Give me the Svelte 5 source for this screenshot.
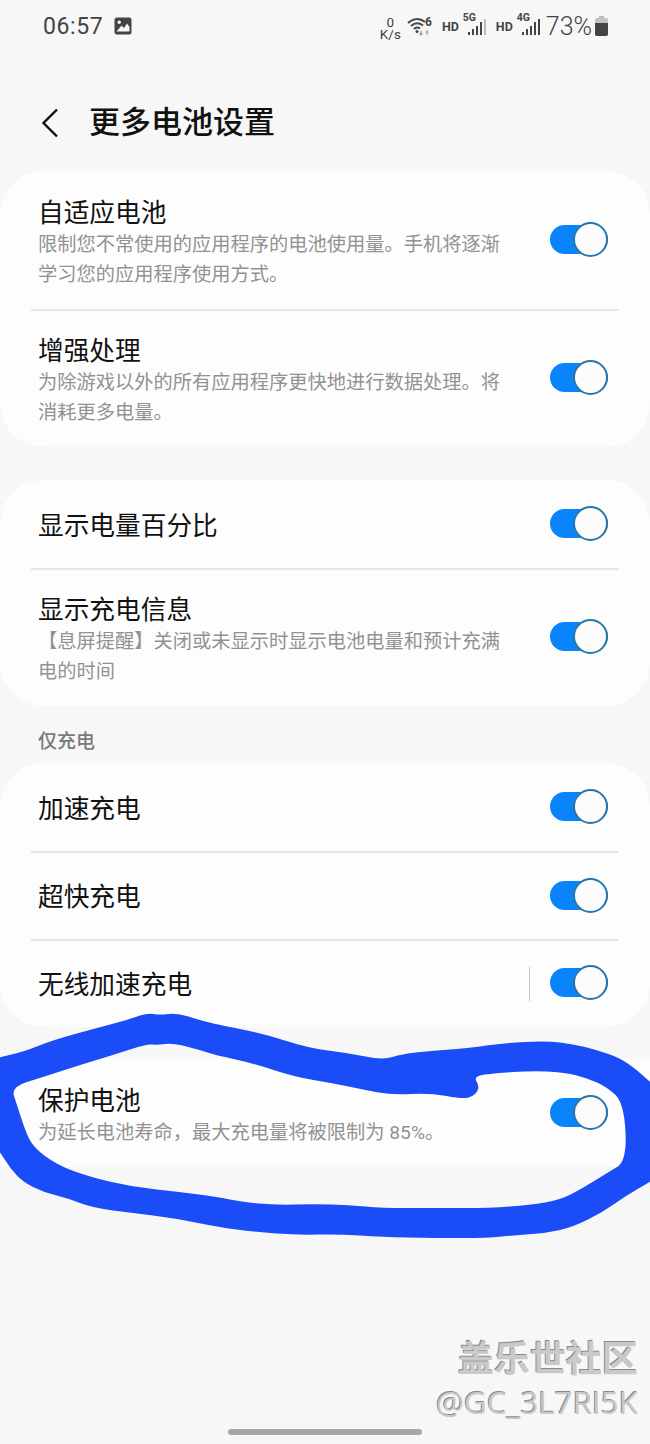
<script>
  const groups = [
    {
      rows: [
        { title: '自适应电池', desc: '限制您不常使用的应用程序的电池使用量。手机将逐渐学习您的应用程序使用方式。', h: 139 },
        { title: '增强处理', desc: '为除游戏以外的所有应用程序更快地进行数据处理。将消耗更多电量。', h: 137 }
      ]
    },
    {
      rows: [
        { title: '显示电量百分比', h: 89 },
        { title: '显示充电信息', desc: '【息屏提醒】关闭或未显示时显示电池电量和预计充满电的时间', h: 137 }
      ]
    },
    {
      label: '仅充电',
      rows: [
        { title: '加速充电', h: 89 },
        { title: '超快充电', h: 88 },
        { title: '无线加速充电', h: 87, split: true }
      ]
    }
  ];

  // hand-drawn marker loop around the last card: outer edge, then the hole inside it
  const inkOuter = [
    [-10, 1060], [0, 1057], [23, 1052], [53, 1040], [97, 1028], [127, 1020], [147, 1013], [160, 1015], [177, 1013],
    [200, 1020], [215, 1024], [265, 1034], [308, 1048], [348, 1053], [383, 1060], [402, 1054], [430, 1051],
    [470, 1048], [503, 1043], [547, 1041], [573, 1044], [597, 1050], [620, 1058], [637, 1070], [650, 1082],
    [660, 1090], [660, 1175], [650, 1182], [627, 1195], [603, 1212], [573, 1227], [547, 1233], [517, 1235],
    [487, 1238], [435, 1238], [382, 1237], [338, 1234], [298, 1235], [255, 1232], [218, 1227], [173, 1218],
    [133, 1213], [93, 1208], [67, 1198], [43, 1192], [23, 1182], [10, 1168], [0, 1152], [-10, 1140]
  ];
  const inkInner = [
    [11, 1087], [43, 1077], [80, 1065], [113, 1055], [147, 1044], [157, 1045], [173, 1043], [200, 1050],
    [215, 1055], [252, 1063], [295, 1077], [332, 1083], [365, 1090], [392, 1095], [430, 1093], [463, 1099],
    [474, 1096], [480, 1087], [473, 1076], [497, 1073], [530, 1071], [563, 1072], [587, 1078], [607, 1087],
    [624, 1103], [627, 1161], [607, 1173], [583, 1188], [560, 1200], [530, 1205], [490, 1208], [435, 1208],
    [382, 1208], [348, 1205], [315, 1204], [275, 1205], [242, 1202], [218, 1197], [180, 1192], [133, 1187],
    [90, 1177], [57, 1165], [33, 1147], [25, 1130], [17, 1105]
  ];

  // closed curve through the midpoints, so the outline doesn't look faceted
  function toPath(pts) {
    const mid = (a, b) => [(a[0] + b[0]) / 2, (a[1] + b[1]) / 2];
    let d = 'M' + mid(pts[pts.length - 1], pts[0]).join(' ');
    pts.forEach((p, i) => {
      d += ' Q' + p.join(' ') + ' ' + mid(p, pts[(i + 1) % pts.length]).join(' ');
    });
    return d + ' Z';
  }
  const scribble = toPath(inkOuter) + ' ' + toPath(inkInner);
</script>

<div class="page">
  <div class="status">
    <span class="clock">06:57</span>
    <svg class="pic" width="18" height="18" viewBox="0 0 18 18">
      <rect x="0.5" y="0.5" width="17" height="17" rx="2.5" fill="#444" />
      <circle cx="5.2" cy="5.2" r="1.7" fill="#f7f7f7" />
      <path d="M2.5 14.5 L7.5 8.5 L10 11 L13 6.5 L15.5 10 V14.5 Z" fill="#f7f7f7" />
    </svg>
    <div class="spacer"></div>
    <div class="speed"><span>0</span><span>K/s</span></div>
    <svg class="wifi" width="27" height="20" viewBox="0 0 27 20">
      <g fill="none" stroke="#444" stroke-width="2">
        <path d="M1 7 C6 2 13 2 18 6" />
        <path d="M4 10 C8 6.5 12 6.5 16 9.5" />
        <path d="M7 13 C9 11 11 11 13 12.5" />
      </g>
      <circle cx="10" cy="15.5" r="1.5" fill="#444" />
      <path d="M14 15 v4 M12.5 17.5 l1.5 1.5 l1.5 -1.5" stroke="#999" stroke-width="1.2" fill="none" />
      <path d="M20 19 v-4 M18.5 16.5 l1.5 -1.5 l1.5 1.5" stroke="#aaa" stroke-width="1.2" fill="none" />
      <text x="18" y="10" class="six">6</text>
    </svg>
    <span class="hd first">HD</span>
    <div class="net">
      <span class="gen">5G</span>
      <svg width="19" height="16" viewBox="0 0 19 16">
        <rect x="1" y="13" width="2" height="3" fill="#444" />
        <rect x="5" y="10" width="2" height="6" fill="#444" />
        <rect x="9" y="7" width="2" height="9" fill="#444" />
        <rect x="13" y="3" width="2" height="13" fill="#444" />
        <rect x="17" y="0" width="2" height="16" fill="#bbb" />
      </svg>
    </div>
    <span class="hd">HD</span>
    <div class="net">
      <span class="gen">4G</span>
      <svg width="19" height="16" viewBox="0 0 19 16">
        <rect x="1" y="13" width="2" height="3" fill="#444" />
        <rect x="5" y="10" width="2" height="6" fill="#444" />
        <rect x="9" y="7" width="2" height="9" fill="#444" />
        <rect x="13" y="3" width="2" height="13" fill="#444" />
        <rect x="17" y="0" width="2" height="16" fill="#444" />
      </svg>
    </div>
    <span class="pct">73%</span>
    <svg class="batt" width="13" height="20" viewBox="0 0 13 20">
      <rect x="4" y="0" width="5" height="2" fill="#bbb" />
      <rect x="0" y="2" width="13" height="18" rx="2" fill="#c4c4c4" />
      <path d="M0 7 H13 V18 a2 2 0 0 1 -2 2 H2 a2 2 0 0 1 -2 -2 Z" fill="#444" />
    </svg>
  </div>

  <header class="head">
    <svg width="18" height="30" viewBox="0 0 18 30">
      <path d="M16 1.5 L2.5 15 L16 28.5" fill="none" stroke="#111" stroke-width="2.4" />
    </svg>
    <h1>更多电池设置</h1>
  </header>

  {#each groups as group}
    {#if group.label}
      <div class="label">{group.label}</div>
    {/if}
    <section class="card">
      {#each group.rows as row, i}
        {#if i > 0}<div class="line"></div>{/if}
        <div class="row" style="height: {row.h}px">
          <div class="text" class:two={row.desc}>
            <div class="title">{row.title}</div>
            {#if row.desc}<div class="desc">{row.desc}</div>{/if}
          </div>
          {#if row.split}<div class="vline"></div>{/if}
          <div class="toggle"><div class="knob"></div></div>
        </div>
      {/each}
    </section>
  {/each}

  <section class="card flat">
    <div class="row" style="height: 108px">
      <div class="text two">
        <div class="title">保护电池</div>
        <div class="desc">为延长电池寿命，最大充电量将被限制为 85%。</div>
      </div>
      <div class="toggle"><div class="knob"></div></div>
    </div>
  </section>

  <svg class="ink" width="650" height="1444" viewBox="0 0 650 1444">
    <path d={scribble} fill="#1a4cf7" fill-rule="evenodd" />
  </svg>

  <div class="mark">
    <div class="mark-cn">盖乐世社区</div>
    <div class="mark-id">@GC_3L7RI5K</div>
  </div>
  <div class="home"></div>
</div>

<style>
  :global(body) {
    background: #f7f7f7;
  }

  .page {
    position: relative;
    width: 650px;
    height: 1444px;
    overflow: hidden;
    background: #f7f7f7;
    font-family: Roboto, "Noto Sans CJK SC", sans-serif;
    color: #111;
  }

  .status {
    display: flex;
    align-items: center;
    height: 52px;
    padding: 0 42px 0 43px;
    color: #444;
  }

  .clock {
    font-size: 23px;
    letter-spacing: 0.6px;
  }

  .pic {
    margin-left: 11px;
  }

  .spacer {
    flex: 1;
  }

  .speed {
    display: flex;
    flex-direction: column;
    align-items: center;
    padding-top: 4px;
    font-size: 13.5px;
    line-height: 12px;
  }

  .wifi {
    margin-left: 6px;
  }

  .six {
    font-size: 12px;
    font-weight: 700;
    fill: #444;
  }

  .hd {
    font-size: 12.5px;
    font-weight: 700;
    margin-left: 10px;
  }

  .hd.first {
    margin-left: 8px;
  }

  .net {
    position: relative;
    margin-left: 8px;
    padding-top: 2px;
    display: flex;
  }

  .gen {
    position: absolute;
    left: -4px;
    top: -6px;
    font-size: 10.5px;
    font-weight: 700;
  }

  .pct {
    font-size: 25px;
    font-weight: 300;
    margin-left: 6px;
  }

  .batt {
    margin-left: 3px;
  }

  .head {
    display: flex;
    align-items: center;
    height: 38px;
    margin-top: 52px;
    margin-bottom: 29px;
    padding-left: 41px;
  }

  .head h1 {
    margin: 0 0 0 30px;
    font-size: 31px;
    font-weight: 500;
    line-height: 38px;
  }

  .label {
    margin: -10px 0 8px 38px;
    font-size: 19px;
    line-height: 26px;
    font-weight: 500;
    color: #7a7a7a;
  }

  .card {
    background: #fdfdfd;
    border-radius: 44px;
    margin-bottom: 33px;
  }

  .label + .card {
    margin-bottom: 32px;
  }

  .card.flat {
    border-radius: 0;
    margin-bottom: 0;
  }

  .row {
    display: flex;
    align-items: center;
    padding: 0 42px 0 38px;
  }

  .text {
    flex: 1;
    min-width: 0;
    padding-top: 2px;
  }

  .text.two {
    padding-top: 6px;
  }

  .title {
    font-size: 25.7px;
    line-height: 32px;
    color: #111;
  }

  .desc {
    width: 470px;
    margin-top: 1px;
    font-size: 19.25px;
    line-height: 30px;
    color: #929292;
  }

  .line {
    height: 2px;
    margin: -1px 31px;
    position: relative;
    background: #e6e6e6;
  }

  .vline {
    width: 1.5px;
    height: 34px;
    margin-right: 20px;
    background: #c8c8c8;
  }

  .toggle {
    position: relative;
    flex: none;
    width: 58px;
    height: 29px;
    margin-top: -2px;
    border-radius: 15px;
    background: #0a84fb;
  }

  .knob {
    position: absolute;
    right: 0;
    top: -3px;
    width: 35px;
    height: 35px;
    box-sizing: border-box;
    border-radius: 50%;
    border: 2px solid #2a76a8;
    background: #fcfcfc;
  }

  .ink {
    position: absolute;
    left: 0;
    top: 0;
    pointer-events: none;
  }

  .mark {
    position: absolute;
    right: 12px;
    top: 1339px;
    display: flex;
    flex-direction: column;
    align-items: flex-end;
    color: #c9c9c9;
    text-shadow: -1px -1px 0 #8a8a8a;
  }

  .mark-cn {
    font-size: 36px;
    line-height: 42px;
    font-weight: 700;
  }

  .mark-id {
    font-family: "Open Sans", sans-serif;
    font-size: 31.4px;
    line-height: 42px;
  }

  .home {
    position: absolute;
    left: 228px;
    top: 1429px;
    width: 194px;
    height: 6px;
    border-radius: 3px;
    background: #a6a6a6;
  }
</style>
